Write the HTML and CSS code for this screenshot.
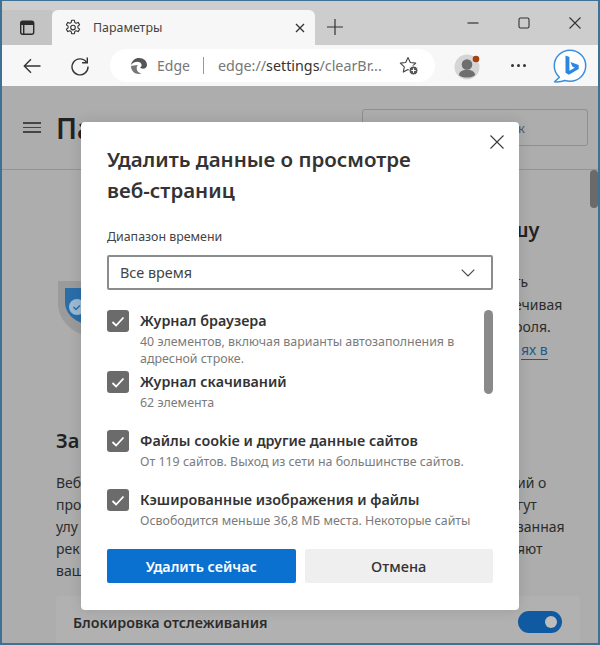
FILE: index.html
```html
<!DOCTYPE html>
<html lang="ru">
<head>
<meta charset="utf-8">
<title>Параметры</title>
<link rel="stylesheet" href="styles.css">
</head>
<body>
<div class="window">
  <div class="tabbar">
    <div class="tab-side">
      <svg class="ico" width="18" height="18" viewBox="0 0 18 18"><rect x="2.700" y="2.200" width="13" height="13" rx="2" fill="none" stroke="#2b2b2b" stroke-width="1.400"/><path d="M3 3h12v3H6.400v9H5V6H3z" fill="#2b2b2b"/></svg>
    </div>
    <div class="tab">
      <svg class="gear" width="18" height="18" viewBox="0 0 18 18"><path d="M7.600 1.300h2.800l.4 2.200 1.300.7 2.100-.8 1.400 2.400-1.700 1.400v1.600l1.700 1.400-1.400 2.400-2.100-.8-1.300.7-.4 2.200H7.600l-.4-2.200-1.300-.7-2.100.8-1.400-2.400 1.700-1.400V7.200L2.400 5.800l1.400-2.400 2.100.8 1.300-.7z" fill="none" stroke="#333" stroke-width="1.100" stroke-linejoin="round"/><circle cx="9" cy="8.600" r="2.300" fill="none" stroke="#333" stroke-width="1.100"/></svg>
      <span class="tab-title">Параметры</span>
      <svg class="tab-close" width="10" height="10" viewBox="0 0 10 10"><path d="M1 1l8 8M9 1l-8 8" stroke="#333" stroke-width="1.300"/></svg>
    </div>
    <svg class="newtab" width="16" height="16" viewBox="0 0 16 16"><path d="M8 0v16M0 8h16" stroke="#333" stroke-width="1.200"/></svg>
    <div class="caption">
      <svg width="12" height="12" viewBox="0 0 12 12"><path d="M0.500 6h11" stroke="#333" stroke-width="1.200"/></svg>
      <svg width="12" height="12" viewBox="0 0 12 12"><rect x="1" y="1" width="10" height="10" rx="1.500" fill="none" stroke="#333" stroke-width="1.100"/></svg>
      <svg width="12" height="12" viewBox="0 0 12 12"><path d="M.5.500l11 11M11.500.500l-11 11" stroke="#333" stroke-width="1.100"/></svg>
    </div>
  </div>

  <div class="toolbar">
    <svg class="nav back" width="18" height="16" viewBox="0 0 18 16"><path d="M17.500 8H1.500M8 1.300L1.300 8 8 14.700" fill="none" stroke="#333" stroke-width="1.400"/></svg>
    <svg class="nav reload" width="20" height="20" viewBox="0 0 20 20"><path d="M16.500 6.200A8 8 0 1 0 18 10.500" fill="none" stroke="#333" stroke-width="1.400"/><path d="M17.300 1.500v5.200h-5.200" fill="none" stroke="#333" stroke-width="1.400"/></svg>
    <div class="address">
      <svg class="edge" width="18" height="18" viewBox="0 0 18 18"><path d="M1 8.200C1.600 3.700 5 1 9.100 1c4.600 0 7.900 3.200 7.900 7 0 2.400-1.800 3.800-4 3.800-1.400 0-2.700-.6-2.900-1.200 1-.6 1.500-1.400 1.500-2.500C11.600 6 9.800 4.700 7.500 4.700 4.500 4.700 2 6 1 8.200z" fill="#555"/><path d="M1 9c0 4.500 3.400 8 7.700 8 1.100 0 2.200-.2 3.300-.8-3.100.3-5.300-2.400-5.300-5 0-1.200.4-2.300 1.300-3.200C4.700 8 2.400 8.800 1 9z" fill="#777"/></svg>
      <span class="site">Edge</span>
      <span class="divider"></span>
      <span class="url">edge://<b>settings</b>/clearBr...</span>
      <svg class="fav" width="20" height="20" viewBox="0 0 20 20"><path d="M9 1.500l2.300 5 5.400.6-4 3.700 1 5.300L9 13.500l-4.700 2.600 1-5.300-4-3.700 5.400-.6z" fill="none" stroke="#444" stroke-width="1.100" stroke-linejoin="round"/><circle cx="14.500" cy="14.500" r="4.500" fill="#555" stroke="#fff"/><path d="M14.500 12.300v4.400M12.300 14.500h4.400" stroke="#fff" stroke-width="1.100"/></svg>
    </div>
    <svg class="avatar" width="28" height="28" viewBox="0 0 28 28"><circle cx="13" cy="15" r="12.500" fill="#d5d5d5"/><circle cx="13" cy="12.500" r="5.300" fill="#6e6e6e"/><path d="M4.800 23c.7-3.600 4-5.200 8.200-5.200s7.500 1.600 8.200 5.200c-2 1.800-4.900 2.600-8.200 2.600S6.800 24.800 4.800 23z" fill="#6e6e6e"/><circle cx="22" cy="7" r="3.300" fill="#a5420f"/></svg>
    <div class="dots"><i></i><i></i><i></i></div>
    <svg class="bing" width="34" height="34" viewBox="0 0 34 34"><path d="M17 1.200C8.300 1.200 1.300 8.200 1.300 16.800c0 4.600 2 8.700 5.100 11.500L1.600 32.800c3.300.4 7.800-.4 10.300-1.300 1.600.5 3.300.8 5.100.8 8.700 0 15.700-7 15.700-15.500S25.700 1.200 17 1.200z" fill="#fff" stroke="#3b8fdc" stroke-width="1.500" stroke-linejoin="round"/><path d="M12.500 6.500l3.900 1.400v13.800l5.400-3-2.500-1.300-1.800-4.300 8.200 2.800v4.100l-9.800 5.700-3.400-1.900z" fill="#2b87e0"/></svg>
  </div>

  <div class="page">
    <header class="page-head">
      <div class="menu"><i></i><i></i><i></i></div>
      <h1 class="page-title">Параметры</h1>
      <div class="search"><span>к</span></div>
    </header>
    <main class="page-body">
      <div class="hero">
        <svg class="shield" width="28" height="56" viewBox="0 0 28 56"><path d="M2 2h26v54C14 52 2 40 2 24z" fill="#9b9b9b"/><path d="M9 9h19v36C17 41 9 34 9 23z" fill="#2a6ea8"/><circle cx="21" cy="28" r="8" fill="#9dbad3"/><path d="M17.500 28l2.500 2.500 4-4" fill="none" stroke="#2a6ea8" stroke-width="1.500"/></svg>
        <div class="hero-text">
          <h2 class="hero-title">шу</h2>
          <p>ть</p>
          <p>ечивая</p>
          <p>роля.</p>
          <p class="hero-link"><a>ях в</a></p>
        </div>
      </div>
      <h2 class="section-title">За</h2>
      <div class="para">
        <p><span class="para-left">Веб</span><span>ий о</span></p>
        <p><span class="para-left">про</span><span>гут</span></p>
        <p><span class="para-left">улу</span><span>занная</span></p>
        <p><span class="para-left">рек</span><span>яют</span></p>
        <p><span class="para-left">ваш</span></p>
      </div>
      <section class="card">
        <span class="card-label">Блокировка отслеживания</span>
        <span class="toggle"></span>
      </section>
    </main>
    <div class="page-thumb"></div>

    <div class="dialog">
      <svg class="dialog-close" width="14" height="14" viewBox="0 0 14 14"><path d="M.5.500l13 13M13.500.500l-13 13" stroke="#3a3a3a" stroke-width="1.100"/></svg>
      <h2 class="dialog-title">Удалить данные о просмотре веб-страниц</h2>
      <label class="field-label">Диапазон времени</label>
      <div class="select">
        <span>Все время</span>
        <svg width="14" height="8" viewBox="0 0 14 8"><path d="M.7.700L7 7l6.300-6.300" fill="none" stroke="#444" stroke-width="1.100"/></svg>
      </div>
      <div class="list-wrap">
        <div class="list">
          <div class="item item-a">
            <span class="check"><svg width="14" height="11" viewBox="0 0 14 11"><path d="M1.500 6l3.600 3.500L12.500 1.500" fill="none" stroke="#fff" stroke-width="1.800"/></svg></span>
            <div><div class="item-name">Журнал браузера</div><div class="item-desc">40 элементов, включая варианты автозаполнения в<br>адресной строке.</div></div>
          </div>
          <div class="item item-b">
            <span class="check"><svg width="14" height="11" viewBox="0 0 14 11"><path d="M1.500 6l3.600 3.500L12.500 1.500" fill="none" stroke="#fff" stroke-width="1.800"/></svg></span>
            <div><div class="item-name">Журнал скачиваний</div><div class="item-desc">62 элемента</div></div>
          </div>
          <div class="item item-c">
            <span class="check"><svg width="14" height="11" viewBox="0 0 14 11"><path d="M1.500 6l3.600 3.500L12.500 1.500" fill="none" stroke="#fff" stroke-width="1.800"/></svg></span>
            <div><div class="item-name">Файлы cookie и другие данные сайтов</div><div class="item-desc">От 119 сайтов. Выход из сети на большинстве сайтов.</div></div>
          </div>
          <div class="item">
            <span class="check"><svg width="14" height="11" viewBox="0 0 14 11"><path d="M1.500 6l3.600 3.500L12.500 1.500" fill="none" stroke="#fff" stroke-width="1.800"/></svg></span>
            <div><div class="item-name">Кэшированные изображения и файлы</div><div class="item-desc">Освободится меньше 36,8 МБ места. Некоторые сайты</div></div>
          </div>
        </div>
        <div class="list-thumb"></div>
      </div>
      <div class="actions">
        <button class="btn btn-primary">Удалить сейчас</button>
        <button class="btn btn-secondary">Отмена</button>
      </div>
    </div>
  </div>
</div>
</body>
</html>
```
FILE: styles.css
```css
* { box-sizing: border-box; }
html, body { margin: 0; height: 100%; }
body { font-family: "Noto Sans", "Open Sans", sans-serif; color: #333; }
svg { display: block; flex: none; }
h1, h2, p { margin: 0; }

.window { width: 600px; height: 645px; display: flex; flex-direction: column; border: 2px solid #3f7096; border-top-width: 1px; overflow: hidden; }

.tabbar { height: 44px; flex: none; background: #cdcdcd; display: flex; align-items: flex-end; }
.tab-side { width: 50px; height: 35px; display: flex; justify-content: center; align-items: center; background: #c4c4c4; }
.tab { width: 263px; height: 35px; background: #f7f7f7; border-radius: 6px 6px 0 0; display: flex; align-items: center; padding-left: 12px; }
.tab-title { font-size: 12.400px; margin-left: 11px; color: #444; flex: 1; }
.tab-close { margin-right: 10px; }
.newtab { margin: 0 0 10px 12px; }
.caption { margin-left: auto; height: 44px; display: flex; gap: 39px; padding: 16px 17px 0 0; align-items: flex-start; }

.toolbar { height: 41px; flex: none; background: #f7f7f7; display: flex; align-items: center; }
.back { margin-left: 21px; }
.reload { margin-left: 29px; }
.address { margin-left: 20px; width: 325px; height: 33px; background: #fff; border-radius: 17px; display: flex; align-items: center; padding-left: 20px; }
.site { font-size: 14px; color: #777; margin-left: 9px; }
.divider { width: 1px; height: 17px; background: #999; margin: 0 14px 0 13px; }
.url { font-size: 14.300px; color: #777; white-space: nowrap; }
.url b { font-weight: 400; color: #333; }
.fav { margin-left: 17px; }
.avatar { margin-left: 19px; }
.dots { display: flex; gap: 3px; margin-left: 29px; }
.dots i { width: 3px; height: 3px; background: #333; border-radius: 50%; }
.bing { margin-left: 27px; }

.page { position: relative; flex: 1; background: #adadad; overflow: hidden; color: #2c2c2c; }
.page-head { height: 84px; border-bottom: 1px solid #939393; display: flex; align-items: center; padding-left: 21px; padding-right: 10px; }
.menu { display: flex; flex-direction: column; gap: 3px; width: 18px; }
.menu i { height: 1.500px; background: #444; }
.page-title { font-size: 28px; font-weight: 600; margin-left: 15px; line-height: 38px; color: #222; }
.search { margin-left: auto; width: 226px; height: 37px; border: 1px solid #8f8f8f; border-radius: 3px; display: flex; align-items: center; padding-left: 155px; font-size: 13px; color: #555; }
.page-thumb { position: absolute; right: 0; top: 84px; width: 8px; height: 38px; background: #6a6a6a; border-radius: 4px; }

.page-body { padding: 0 18px 0 54px; }
.hero { display: flex; height: 261px; align-items: flex-start; }
.shield { margin-top: 109px; }
.hero-text { margin-left: 430px; padding-top: 46px; white-space: nowrap; }
.hero-title { font-size: 20px; font-weight: 600; line-height: 28px; margin-bottom: 27px; margin-left: -4px; color: #222; }
.hero-text p { font-size: 14px; line-height: 22.500px; }
.hero-text .hero-link { padding-left: 7px; }
.hero-text a { color: #1d5a8f; border-bottom: 1px solid #1d5a8f; }
.section-title { font-size: 20px; font-weight: 600; line-height: 28px; margin-top: -4px; color: #222; }
.para { margin-top: 17px; }
.para p { font-size: 14px; line-height: 22px; display: flex; }
.para-left { width: 461px; flex: none; }
.card { margin-top: 14px; height: 60px; background: #b1b1b1; border-radius: 4px; display: flex; align-items: flex-start; justify-content: space-between; padding: 15px 18px 0 17px; }
.card-label { font-size: 14.300px; font-weight: 600; line-height: 24px; }
.toggle { width: 44px; height: 22px; border-radius: 11px; background: #0f5aa0; position: relative; }
.toggle::after { content: ""; position: absolute; right: 5px; top: 5px; width: 12px; height: 12px; border-radius: 50%; background: #bdbdbd; }

.dialog { position: absolute; left: 79px; top: 36px; width: 438px; height: 488px; background: #fff; border-radius: 4px; padding: 22px 26px 0; color: #333; box-shadow: 0 0 14px rgba(0,0,0,.12); }
.dialog-close { position: absolute; right: 15px; top: 13px; }
.dialog-title { font-size: 20.500px; font-weight: 600; line-height: 31px; width: 340px; }
.field-label { display: block; font-size: 12.400px; line-height: 18px; margin-top: 22px; color: #444; }
.select { height: 35px; margin-top: 9px; border: 2px solid #8c8c8c; border-radius: 2px; display: flex; align-items: center; justify-content: space-between; padding: 0 16px 0 11px; font-size: 14.400px; color: #444; }
.list-wrap { position: relative; margin-top: 20px; height: 218px; }
.list-thumb { position: absolute; right: 0; top: 0; width: 9px; height: 84px; background: #8a8a8a; border-radius: 5px; }
.list { width: 372px; }
.item { display: flex; gap: 11px; align-items: flex-start; }
.item-a { height: 61px; }
.item-b { height: 59px; }
.item-c { height: 59px; }
.check { width: 22px; height: 22px; flex: none; background: #6b6b6b; border-radius: 3px; display: flex; align-items: center; justify-content: center; }
.item-name { font-size: 14.300px; font-weight: 600; line-height: 22px; color: #333; white-space: nowrap; }
.item-desc { font-size: 12.400px; line-height: 17px; color: #7b7b7b; margin-top: 1px; white-space: nowrap; }
.actions { display: flex; gap: 9px; margin-top: 21px; }
.btn { flex: 1; height: 34px; border: 0; border-radius: 2px; font-family: inherit; font-size: 14.300px; }
.btn-primary { background: #0a71d1; color: #fff; font-weight: 600; }
.btn-secondary { background: #efefef; color: #333; font-weight: 500; font-size: 14.600px; }
```
